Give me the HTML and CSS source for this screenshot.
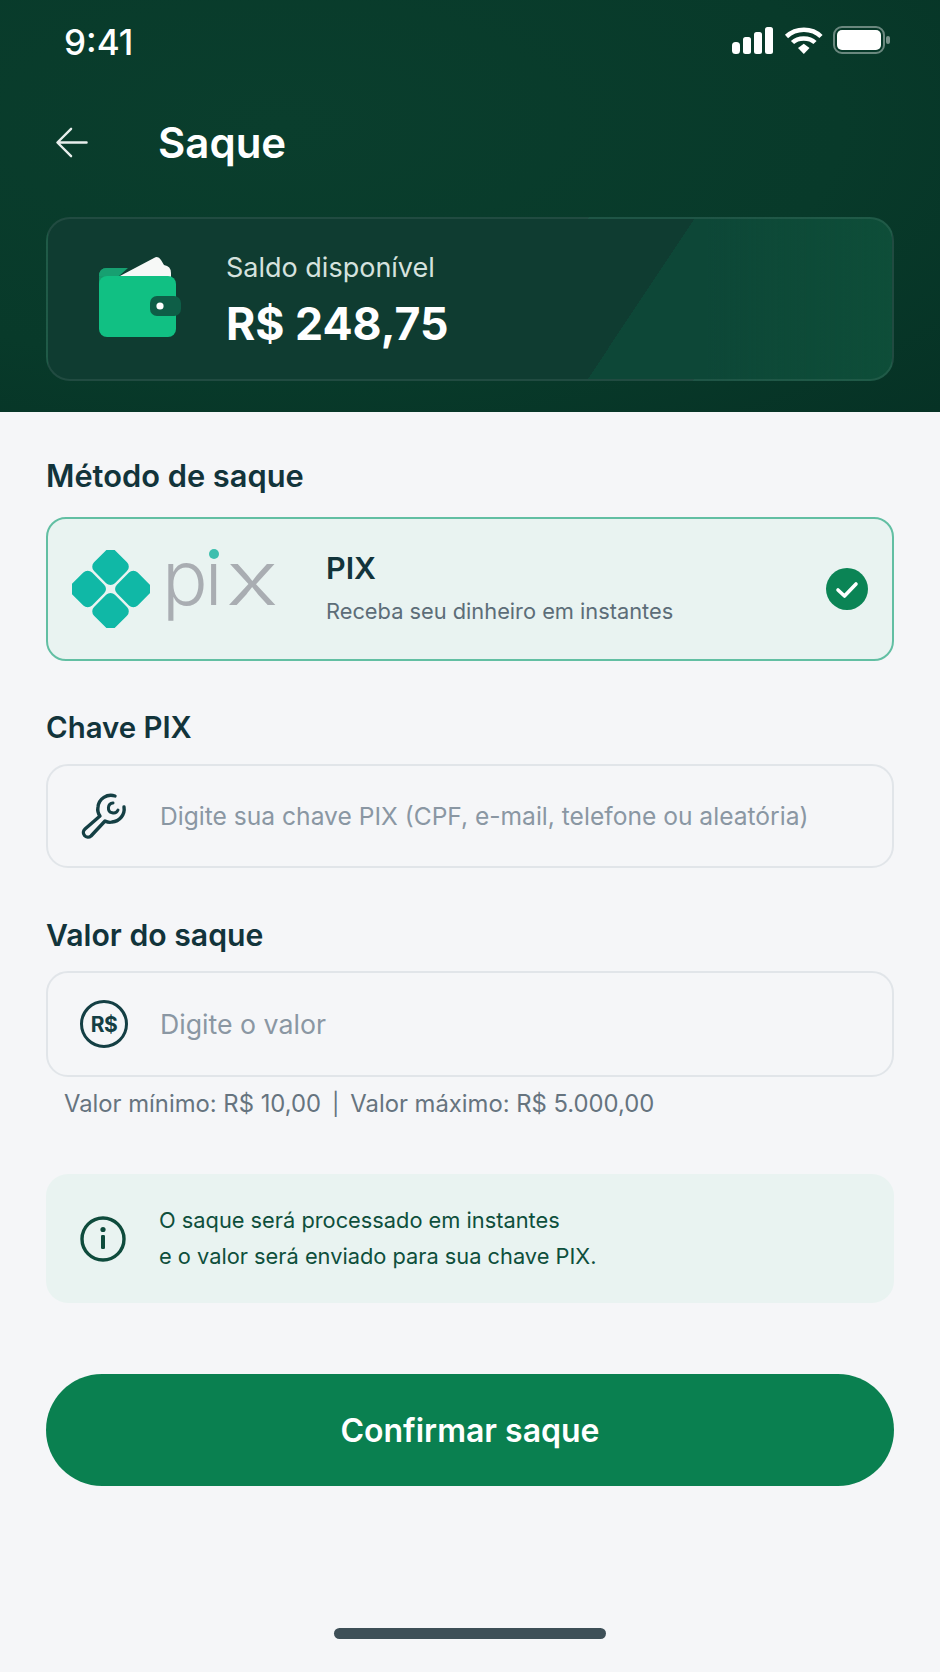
FILE: index.html
```html
<!DOCTYPE html>
<html>
<head>
    <title>Saque</title>
    <link rel="stylesheet" href="styles.css">
</head>
<body>
    <div id="header">
        <div class="status">
            <span class="time">9:41</span>
            <svg class="status-icons" width="160" height="30" viewBox="0 0 160 30">
                <rect x="0" y="16" width="8" height="12" rx="3.5" fill="#fff"/>
                <rect x="11" y="11" width="8" height="17" rx="2.5" fill="#fff"/>
                <rect x="22" y="6" width="8" height="22" rx="2.5" fill="#fff"/>
                <rect x="33" y="1" width="8" height="27" rx="2.5" fill="#fff"/>
                <path d="M54.5 10.5 C64 1.5 80 1.5 89 10.5" fill="none" stroke="#fff" stroke-width="4.5"/>
                <path d="M60.5 16.5 C66 11 77.5 11 83 16.5" fill="none" stroke="#fff" stroke-width="4.5"/>
                <path d="M66 22 L71.8 17.8 L77.5 22 L71.8 28 Z" fill="#fff"/>
                <rect x="102" y="1" width="50" height="26" rx="8" fill="none" stroke="#fff" stroke-opacity=".4" stroke-width="2"/>
                <rect x="105" y="4" width="44" height="20" rx="5" fill="#fff"/>
                <rect x="154" y="10" width="4" height="8" rx="2" fill="#fff" fill-opacity=".45"/>
            </svg>
        </div>
        <div class="nav">
            <svg class="back" width="34" height="31" viewBox="0 0 36 34">
                <path d="M34 17 H3 M17 2 L2 17 L17 32" fill="none" stroke="#e8eeec" stroke-width="2.6" stroke-linecap="round" stroke-linejoin="round"/>
            </svg>
            <h1>Saque</h1>
        </div>
        <div id="balance">
            <svg class="wallet" width="84" height="84" viewBox="0 0 84 84">
                <path d="M20 22 L56 3 Q60 0 63 5 L66 10 Q73 11 73 18 V24 H20 Z" fill="#f7f8f7"/>
                <path d="M1 22 Q1 13 9 13 H30 L20 22 V30 H1 Z" fill="#169a6c"/>
                <rect x="1" y="21" width="77" height="61" rx="8" fill="#11c083"/>
                <path d="M1 21 Q1 13 9 13 H29 L20 21 Z" fill="#17a071"/>
                <rect x="52" y="41" width="31" height="20" rx="7" fill="#0e5e47"/>
                <circle cx="62" cy="51" r="3.6" fill="#fff"/>
            </svg>
            <div class="balance-text">
                <div class="balance-label">Saldo disponível</div>
                <div class="balance-value">R$ 248,75</div>
            </div>
        </div>
    </div>

    <div id="content">
        <h2 class="first">Método de saque</h2>
        <div id="method">
            <svg class="pix-mark" width="78" height="78" viewBox="0 0 82 82">
                <rect x="25" y="2" width="31" height="31" rx="6.5" transform="rotate(45 40.5 17.5)" fill="#10b8a6"/>
                <rect x="25" y="49" width="31" height="31" rx="6.5" transform="rotate(45 40.5 64.5)" fill="#10b8a6"/>
                <rect x="1" y="25.5" width="31" height="31" rx="6.5" transform="rotate(45 16.5 41)" fill="#10b8a6"/>
                <rect x="49" y="25.5" width="31" height="31" rx="6.5" transform="rotate(45 64.5 41)" fill="#10b8a6"/>
            </svg>
            <div class="pix-word"><span class="pix-p">p</span><span class="pix-i">i</span><span class="pix-x">x</span><span class="pix-dot"></span></div>
            <div class="method-text">
                <div class="method-name">PIX</div>
                <div class="method-desc">Receba seu dinheiro em instantes</div>
            </div>
            <svg class="check" width="42" height="42" viewBox="0 0 42 42">
                <circle cx="21" cy="21" r="21" fill="#0b8455"/>
                <path d="M12 22 L18.5 28 L30 16" fill="none" stroke="#fff" stroke-width="3.6" stroke-linecap="round" stroke-linejoin="round"/>
            </svg>
        </div>

        <h2 class="key-label">Chave PIX</h2>
        <div class="field">
            <svg width="48" height="48" viewBox="0 0 48 48">
                <path d="M35 4 A13 13 0 0 0 18 15 Q17 20 20 24 L5 37 A4.5 4.5 0 0 0 11 44 L25 29 Q29 31 32 30 A13 13 0 0 0 44 15" fill="none" stroke="#143f44" stroke-width="3.4" stroke-linecap="round" stroke-linejoin="round"/>
                <path d="M33 11 A5 5 0 1 0 38 18" fill="none" stroke="#143f44" stroke-width="3" stroke-linecap="round"/>
            </svg>
            <span class="placeholder">Digite sua chave PIX (CPF, e-mail, telefone ou aleatória)</span>
        </div>

        <h2 class="value-label">Valor do saque</h2>
        <div class="field tall">
            <div class="money-icon">R$</div>
            <span class="placeholder">Digite o valor</span>
        </div>
        <div class="hint">Valor mínimo: R$ 10,00<span class="sep">|</span>Valor máximo: R$ 5.000,00</div>

        <div id="info">
            <svg width="48" height="48" viewBox="0 0 48 48">
                <circle cx="24" cy="24" r="21" fill="none" stroke="#0e4b3c" stroke-width="3.4"/>
                <circle cx="24" cy="14.5" r="2.6" fill="#0e4b3c"/>
                <rect x="22" y="20" width="4" height="14" rx="1.2" fill="#0e4b3c"/>
            </svg>
            <div class="info-text">O saque será processado em instantes<br>e o valor será enviado para sua chave PIX.</div>
        </div>

        <button id="confirm">Confirmar saque</button>
        <div class="home-bar"></div>
    </div>
</body>
</html>
```

FILE: styles.css
```css
html, body {
    margin: 0;
    padding: 0;
}

body {
    width: 940px;
    height: 1672px;
    overflow: hidden;
    background-color: #f5f6f8;
    font-family: Inter, "Liberation Sans", sans-serif;
}

#header {
    height: 412px;
    box-sizing: border-box;
    background: radial-gradient(ellipse at 30% 30%, #0a3e2d 0%, #083a2a 60%, #063225 100%);
    color: white;
}

.status {
    height: 82px;
    display: flex;
    align-items: center;
    justify-content: space-between;
    padding: 0 48px 0 64px;
}

.time {
    margin-top: 2px;
    font-size: 35px;
    font-weight: 500;
}

.status-icons {
    margin-top: -1px;
}

.nav {
    height: 120px;
    display: flex;
    align-items: center;
    padding-left: 55px;
}

    .nav h1 {
        margin: 0 0 0 69px;
        font-size: 42px;
        font-weight: 600;
    }

#balance {
    height: 164px;
    box-sizing: border-box;
    margin: 15px 46px 0;
    padding-left: 50px;
    display: flex;
    align-items: center;
    gap: 44px;
    border: 2px solid rgba(255, 255, 255, 0.08);
    border-radius: 24px;
    background:
        linear-gradient(90deg, transparent 78%, rgba(14, 84, 58, 0.5) 100%),
        linear-gradient(123.6deg, transparent 68%, #0d4737 68%),
        #0f3c31;
}

.wallet {
    margin-bottom: 4px;
}

.balance-text {
    padding-top: 4px;
}

.balance-label {
    font-size: 27px;
    font-weight: 400;
    color: #d5e2de;
}

.balance-value {
    margin-top: 13px;
    font-size: 44.6px;
    font-weight: 700;
}

#content {
    padding: 44px 46px 0;
}

h2 {
    margin: 47px 0 16px;
    font-size: 30.8px;
    line-height: 40px;
    font-weight: 600;
    color: #12343b;
}

    h2.first {
        margin-top: 0;
        margin-bottom: 21px;
    }

    h2.key-label {
        font-size: 29.4px;
    }

    h2.value-label {
        font-size: 30.2px;
    }

#method {
    height: 144px;
    box-sizing: border-box;
    position: relative;
    display: flex;
    align-items: center;
    padding: 0 24px;
    border: 2px solid #62bfa3;
    border-radius: 20px;
    background-color: #e9f3f1;
}

.pix-mark {
    flex: none;
}

.pix-word {
    position: relative;
    width: 124px;
    margin-left: 12px;
    margin-bottom: 24px;
    font-size: 76px;
    line-height: 72px;
    font-weight: 300;
    color: #a9adb2;
}

.pix-p {
    letter-spacing: -3px;
}

.pix-i {
    letter-spacing: 3px;
}

.pix-x {
    display: inline-block;
    transform: scaleX(1.3);
    transform-origin: left;
}

.pix-dot {
    position: absolute;
    left: 47px;
    top: 8px;
    width: 10px;
    height: 10px;
    border-radius: 50%;
    background-color: #3dbfae;
    box-shadow: 0 0 0 3px #e9f3f1;
}

.method-text {
    flex: 1;
    margin-left: 40px;
    padding-bottom: 6px;
}

.method-name {
    font-size: 30.5px;
    font-weight: 600;
    color: #12343b;
}

.method-desc {
    margin-top: 12px;
    font-size: 21.8px;
    color: #5c6d78;
}

.field {
    height: 104px;
    box-sizing: border-box;
    display: flex;
    align-items: center;
    padding-left: 32px;
    gap: 32px;
    border: 2px solid #e1e5e9;
    border-radius: 22px;
}

    .field.tall {
        height: 106px;
    }

.placeholder {
    font-size: 24.6px;
    color: #8a97a3;
}

.tall .placeholder {
    font-size: 26.7px;
}

.money-icon {
    width: 48px;
    height: 48px;
    box-sizing: border-box;
    display: flex;
    align-items: center;
    justify-content: center;
    border: 3.4px solid #143f44;
    border-radius: 50%;
    font-size: 21px;
    font-weight: 700;
    letter-spacing: -0.5px;
    color: #143f44;
}

.hint {
    margin-top: 12px;
    padding-left: 18px;
    font-size: 23.8px;
    line-height: 30px;
    color: #66747f;
}

.sep {
    margin: 0 11px;
    font-size: 22px;
}

#info {
    height: 129px;
    box-sizing: border-box;
    margin-top: 55px;
    padding-left: 33px;
    display: flex;
    align-items: center;
    gap: 32px;
    border-radius: 22px;
    background-color: #e9f3f1;
}

.info-text {
    padding-bottom: 2px;
    font-size: 21.8px;
    line-height: 36px;
    color: #0e4f3c;
}

#confirm {
    display: block;
    width: 100%;
    height: 112px;
    margin-top: 71px;
    border: 0;
    border-radius: 56px;
    background-color: #0a8050;
    color: white;
    font-family: inherit;
    font-size: 32px;
    font-weight: 600;
}

.home-bar {
    width: 272px;
    height: 11px;
    margin: 142px auto 0;
    border-radius: 6px;
    background-color: #3d4f57;
}
```
